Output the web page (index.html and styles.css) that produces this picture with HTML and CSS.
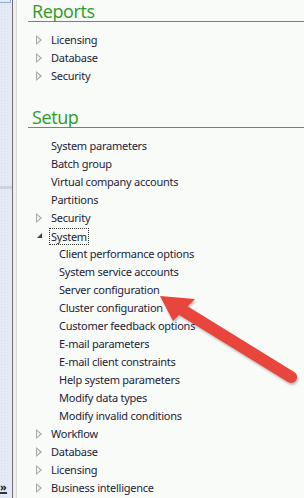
FILE: index.html
```html
<!DOCTYPE html>
<html lang="en">
<head>
    <meta charset="UTF-8">
    <title>Area page</title>
    <link rel="stylesheet" href="styles.css">
</head>
<body>
    <div class="side-strip">
        <div class="strip-top"></div>
        <div class="strip-mid"></div>
        <div class="strip-icon">&raquo;</div>
    </div>
    <div class="side-rule"></div>

    <div class="area-page">
        <h2 class="group-title">Reports</h2>
        <ul class="menu">
            <li class="node"><span class="twisty"></span>Licensing</li>
            <li class="node"><span class="twisty"></span>Database</li>
            <li class="node"><span class="twisty"></span>Security</li>
        </ul>

        <h2 class="group-title setup">Setup</h2>
        <ul class="menu">
            <li class="leaf">System parameters</li>
            <li class="leaf">Batch group</li>
            <li class="leaf">Virtual company accounts</li>
            <li class="leaf">Partitions</li>
            <li class="node"><span class="twisty"></span>Security</li>
            <li class="node open"><span class="twisty"></span><span class="focus">System</span></li>
            <li class="child">Client performance options</li>
            <li class="child">System service accounts</li>
            <li class="child">Server configuration</li>
            <li class="child">Cluster configuration</li>
            <li class="child">Customer feedback options</li>
            <li class="child">E-mail parameters</li>
            <li class="child">E-mail client constraints</li>
            <li class="child">Help system parameters</li>
            <li class="child">Modify data types</li>
            <li class="child">Modify invalid conditions</li>
            <li class="node"><span class="twisty"></span>Workflow</li>
            <li class="node"><span class="twisty"></span>Database</li>
            <li class="node"><span class="twisty"></span>Licensing</li>
            <li class="node"><span class="twisty"></span>Business intelligence</li>
        </ul>
    </div>

    <!-- callout arrow pointing at Server configuration -->
    <svg class="callout" width="304" height="498" viewBox="0 0 304 498">
        <line x1="184" y1="311" x2="291" y2="377" stroke="#e8463d" stroke-width="12" stroke-linecap="round"/>
        <polygon points="160,296 195,299 173,321" fill="#e8463d"/>
    </svg>
</body>
</html>
```

FILE: styles.css
```css
body {
    margin: 0;
    height: 498px;
    overflow: hidden;
    display: flex;
    font-family: "Noto Sans", "Open Sans", sans-serif;
    background-color: #f8fbf8;
}
.side-strip {
    width: 12px;
    display: flex;
    flex-direction: column;
    background-color: #e4ebf6;
    background-image: radial-gradient(#d6dfee 0.6px, transparent 0.6px);
    background-size: 3px 3px;
    border-right: 1px solid #6f6f6f;
}
.strip-top {
    height: 2px;
    border-bottom: 1px solid #8fb0d8;
    border-right: 1px solid #8fb0d8;
    width: 10px;
}
.strip-mid {
    margin-top: 183px;
    height: 3px;
    background-color: #ccd3dd;
}
.strip-icon {
    margin-top: auto;
    margin-bottom: 4px;
    font-size: 11px;
    line-height: 8px;
    font-weight: bold;
    color: #222;
    border-bottom: 2px solid #333;
    width: 7px;
    padding-bottom: 1px;
}
.side-rule {
    width: 3px;
    background-color: #efefef;
    border-right: 1px solid #d8d8d8;
}
.area-page {
    flex: 1;
    padding-left: 11px;
}
.group-title {
    margin: 0;
    height: 21px;
    padding-left: 4px;
    font-family: "Open Sans", sans-serif;
    font-weight: normal;
    font-size: 18px;
    line-height: 22px;
    letter-spacing: -0.4px;
    color: #2e9a1e;
    border-bottom: 1px solid #7d7d7d;
    overflow: visible;
}
.group-title.setup {
    margin-top: 21px;
}
.menu {
    list-style: none;
    margin: 9px 0 0;
    padding: 0;
}
.menu li {
    height: 18px;
    line-height: 18px;
    font-size: 11px;
    letter-spacing: -0.25px;
    color: #1c1c38;
    white-space: nowrap;
    display: flex;
    align-items: center;
}
.leaf, .node {
    padding-left: 23px;
}
.node {
    position: relative;
}
.child {
    padding-left: 31px;
}
.twisty {
    position: absolute;
    left: 8px;
    top: 4px;
    width: 0;
    height: 0;
    border-top: 5px solid transparent;
    border-bottom: 5px solid transparent;
    border-left: 6px solid #a8a8a8;
}
.twisty::after {
    content: "";
    position: absolute;
    left: -5px;
    top: -3px;
    border-top: 3px solid transparent;
    border-bottom: 3px solid transparent;
    border-left: 3px solid #f8fbf8;
}
.node.open .twisty {
    left: 9px;
    top: 6px;
    border-top: 0;
    border-left: 5px solid transparent;
    border-bottom: 5px solid #404040;
}
.node.open .twisty::after {
    display: none;
}
.focus {
    margin-left: -2px;
    padding: 0 1px;
    line-height: 15px;
    border: 1px dotted #333;
}
.callout {
    position: absolute;
    left: 0;
    top: 0;
    pointer-events: none;
    filter: drop-shadow(1px 2px 1px rgba(0,0,0,0.25));
}
```
